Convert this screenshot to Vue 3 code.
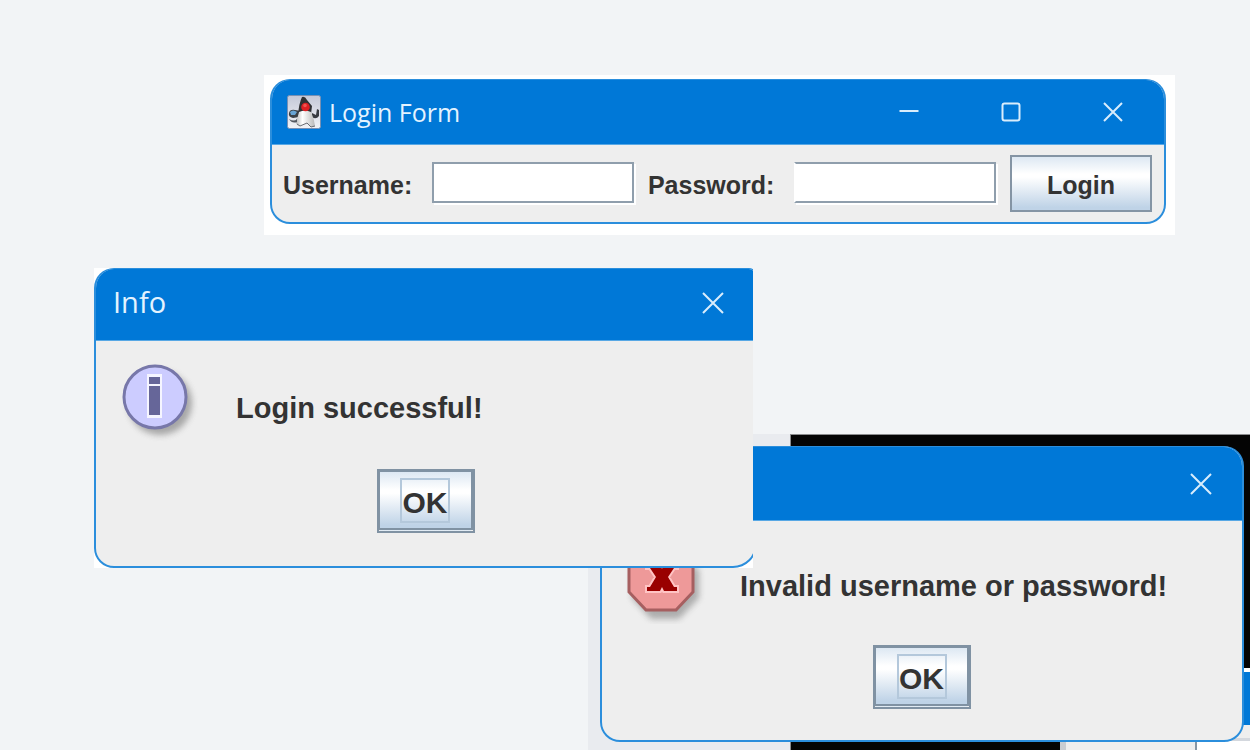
<script setup>
import { ref } from 'vue'

const username = ref('')
const password = ref('')
</script>

<template>
  <main class="desktop">
    <div class="backdrop" aria-hidden="true">
      <div class="terminal"></div>
      <div class="behind">
        <div class="behind-bar"></div>
        <div class="behind-body"></div>
      </div>
      <div class="behind-row">
        <div class="behind-label"></div>
        <div class="behind-field"></div>
      </div>
    </div>

    <section class="sheet login-sheet">
      <div class="window">
        <header class="titlebar">
          <svg class="duke" viewBox="0 0 34 34" aria-hidden="true">
            <defs>
              <linearGradient id="tile" x1="0" y1="0" x2="0" y2="1">
                <stop offset="0" stop-color="#c4c8d8" />
                <stop offset="1" stop-color="#f2f3f6" />
              </linearGradient>
              <linearGradient id="belly" x1="0" y1="0" x2="1" y2="0">
                <stop offset="0" stop-color="#b8b8b8" />
                <stop offset=".35" stop-color="#ffffff" />
                <stop offset="1" stop-color="#b9b9b9" />
              </linearGradient>
            </defs>
            <rect x=".5" y=".5" width="33" height="33" rx="2" fill="url(#tile)" stroke="#7890b4" />
            <path d="M2 18Q3 14 8 15L14 16L12 22L6 23Q1 22 2 18Z" fill="#3b4046" />
            <path d="M3 17Q6 14 10 17L8 20L4 20Z" fill="#68a4d4" />
            <path d="M25 18L29 20L30 14L32 15V21Q29 25 25 22Z" fill="#383b41" />
            <path d="M15 2Q18 1 20 5L25 11L24 19Q18 16 11 20Q12 8 15 2Z" fill="#303134" />
            <path d="M12 17Q18 14 24 17Q27 23 28 31L24 32L20 28L12 31Q8 29 9 25Q11 22 12 17Z" fill="url(#belly)" />
            <path d="M2 24Q7 27 10 24L10 27Q5 29 2 24Z" fill="#555960" />
            <path d="M10 29L13 31L20 28L24 32L28 31" fill="none" stroke="#6b6d73" />
            <circle cx="18.5" cy="12" r="4.3" fill="#df2024" />
            <circle cx="18" cy="10.5" r="1.8" fill="#f0544f" />
          </svg>
          <h1 class="title">Login Form</h1>
          <div class="controls">
            <button type="button" class="control" aria-label="Minimize">
              <svg viewBox="0 0 20 20"><path d="M.5 9H19.5" /></svg>
            </button>
            <button type="button" class="control" aria-label="Maximize">
              <svg viewBox="0 0 20 20"><rect x="1.5" y="1.5" width="17" height="17" rx="2" /></svg>
            </button>
            <button type="button" class="control" aria-label="Close">
              <svg viewBox="0 0 20 20"><path d="M1 1L19 19M19 1L1 19" /></svg>
            </button>
          </div>
        </header>
        <form class="form" @submit.prevent>
          <label for="username">Username:</label>
          <input id="username" v-model="username" type="text" autocomplete="off" />
          <label for="password">Password:</label>
          <input id="password" v-model="password" class="secret" type="password" autocomplete="off" />
          <button type="submit" class="metal login">Login</button>
        </form>
      </div>
    </section>

    <section class="window dialog error" role="alertdialog" aria-labelledby="error-text">
      <header class="titlebar">
        <button type="button" class="control" aria-label="Close">
          <svg viewBox="0 0 22 22"><path d="M1 1L21 21M21 1L1 21" /></svg>
        </button>
      </header>
      <div class="message">
        <svg class="badge" viewBox="0 0 80 80" aria-hidden="true">
          <defs>
            <filter id="soft" x="-20%" y="-20%" width="150%" height="150%">
              <feGaussianBlur stdDeviation="3" />
            </filter>
          </defs>
          <path d="M25 7H53L73 27V54L53 75H25L6 54V27Z" fill="#777" opacity=".55" filter="url(#soft)" />
          <path d="M21 2H49L67 20V48L50 66H20L3 48V20Z" fill="#ee9999" stroke="#a65f60" stroke-width="3" />
          <path d="M21 20H34L36 25L38 20H51V24H48L42 33L48 43H51V47H38L36 43L34 47H21V43H24L30 33L24 24H21Z" fill="#990000" stroke="#ffc4c4" stroke-width="4" paint-order="stroke" />
        </svg>
        <p id="error-text">Invalid username or password!</p>
      </div>
      <div class="actions">
        <button type="button" class="metal ok"><span>OK</span></button>
      </div>
    </section>

    <section class="sheet info-sheet" role="dialog" aria-labelledby="info-title">
      <div class="window dialog info">
        <header class="titlebar">
          <h2 id="info-title" class="title">Info</h2>
          <button type="button" class="control" aria-label="Close">
            <svg viewBox="0 0 22 22"><path d="M1 1L21 21M21 1L1 21" /></svg>
          </button>
        </header>
        <div class="message">
          <svg class="badge" viewBox="0 0 80 80" aria-hidden="true">
            <circle cx="40" cy="41" r="32" fill="#777" opacity=".6" filter="url(#soft)" />
            <circle cx="35" cy="35" r="31" fill="#ccccff" stroke="#7777a9" stroke-width="3" />
            <path d="M27 12H42V56H27Z" fill="#f5f5ff" />
            <path d="M29 15H40V22H29ZM29 24H40V53H29Z" fill="#666699" />
          </svg>
          <p>Login successful!</p>
        </div>
        <div class="actions">
          <button type="button" class="metal ok"><span>OK</span></button>
        </div>
      </div>
    </section>
  </main>
</template>

<style>
body {
  margin: 0;
}
</style>

<style scoped>
* {
  box-sizing: border-box;
}

.desktop {
  position: relative;
  height: 100vh;
  overflow: hidden;
  background: #f2f4f6;
  color: #333;
  font-family: "Liberation Sans", Arial, sans-serif;
  font-weight: bold;
}

.sheet {
  position: absolute;
  overflow: hidden;
  background: #fff;
}

.window {
  overflow: hidden;
  border: 2px solid #2b8edc;
  border-top-width: 1px;
  border-radius: 20px;
  background: #eee;
}

.titlebar {
  display: flex;
  align-items: center;
  background: #0078d7;
  border-bottom: 1px solid #58a8e5;
  color: #e4f3ff;
}

.title {
  margin: 0;
  font-family: "Open Sans", "Noto Sans", sans-serif;
  font-weight: 400;
  line-height: 36px;
}

button,
input {
  margin: 0;
  padding: 0;
  border-radius: 0;
  font: inherit;
  color: inherit;
}

.control {
  display: grid;
  place-items: center;
  margin-left: auto;
  border: 0;
  background: none;
}

.control svg {
  display: block;
  width: 20px;
  fill: none;
  stroke: #d9edfc;
  stroke-width: 2;
}

/* login form */
.login-sheet {
  left: 264px;
  top: 75px;
  width: 911px;
  padding: 4px 9px 11px 6px;
}

.login-sheet .titlebar {
  height: 65px;
  padding: 0 41px 0 15px;
  gap: 8px;
}

.login-sheet .title {
  font-size: 25px;
}

.duke {
  width: 34px;
  height: 34px;
}

.controls {
  display: flex;
  gap: 82px;
  margin-left: auto;
}

.form {
  display: flex;
  align-items: center;
  height: 77px;
  padding: 0 12px 0 11px;
  font-size: 25px;
}

.form label {
  flex: none;
  margin-right: 20px;
  padding-top: 3px;
  line-height: 30px;
}

.form input {
  flex: 1;
  min-width: 0;
  height: 41px;
  margin-right: 14px;
  margin-bottom: 2px;
  padding: 0 8px;
  border: 2px solid #8f9eac;
  background: #fff;
  box-shadow: 2px 2px #fff;
  outline: 0;
}

.form .secret {
  border-left-color: #fff;
}

.metal {
  border: 2px solid #8494a4;
  background: linear-gradient(#dde8f3, #fff 32%, #fff 38%, #bfd3e7 95%);
}

.login {
  width: 142px;
  height: 57px;
  padding-top: 4px;
}

/* message dialogs */
.dialog .titlebar {
  height: 72px;
}

.dialog .title {
  padding-bottom: 4px;
  font-size: 29px;
}

.dialog .control svg {
  width: 22px;
}

.message {
  display: flex;
  align-items: center;
  height: 124px;
  padding: 6px 0 0 24px;
  font-size: 29px;
}

.message p {
  margin: 0 0 0 34px;
  white-space: nowrap;
  line-height: 36px;
}

.badge {
  flex: none;
  width: 80px;
  height: 80px;
  margin-bottom: 4px;
}

.actions {
  display: flex;
  justify-content: center;
}

.ok {
  display: grid;
  place-items: center;
  width: 98px;
  height: 64px;
  border: 3px solid #8092a3;
  border-right-width: 4px;
  border-bottom: 5px double #8092a3;
  font-size: 30px;
}

.ok span {
  display: grid;
  place-items: center;
  width: 50px;
  height: 45px;
  padding-top: 6px;
  border: 2px solid #b4c8db;
  line-height: 34px;
}

.info-sheet {
  left: 94px;
  top: 268px;
  width: 659px;
}

.info {
  width: 663px;
  height: 300px;
  border-radius: 20px 8px 24px 20px;
}

.info .titlebar {
  padding: 0 31px 4px 17px;
}

.info .title {
  padding-bottom: 2px;
}

.info .message {
  height: 128px;
  padding: 6px 0 0 24px;
}

.info .message p {
  margin-left: 36px;
}

.info .badge {
  margin-bottom: 12px;
}

.error {
  position: absolute;
  left: 600px;
  top: 446px;
  width: 644px;
  height: 296px;
}

.error .titlebar {
  height: 74px;
  padding-right: 30px;
}

/* surfaces showing behind the error dialog */
.backdrop {
  position: absolute;
  inset: 434px 0 0 588px;
  background: #e9ebef;
}

.terminal {
  height: 100%;
  margin-left: 202px;
  border: 1px solid #8b8c8e;
  border-right: 0;
  border-bottom: 0;
  background: #040404;
}

.behind {
  position: absolute;
  right: 0;
  bottom: 0;
  width: 30px;
  height: 82px;
  padding-top: 4px;
  background: #fff;
}

.behind-bar {
  height: 53px;
  background: #0078d7;
}

.behind-body {
  height: 25px;
  background: #eee;
}

.behind-row {
  position: absolute;
  right: 0;
  bottom: 0;
  display: flex;
  width: 190px;
  height: 12px;
}

.behind-label {
  width: 137px;
  border-left: 6px solid #c9cdd2;
  border-right: 2px solid #8696a5;
  background: #eee;
}

.behind-field {
  flex: 1;
  border-top: 3px solid #d4d8de;
  background: #fff;
}
</style>
